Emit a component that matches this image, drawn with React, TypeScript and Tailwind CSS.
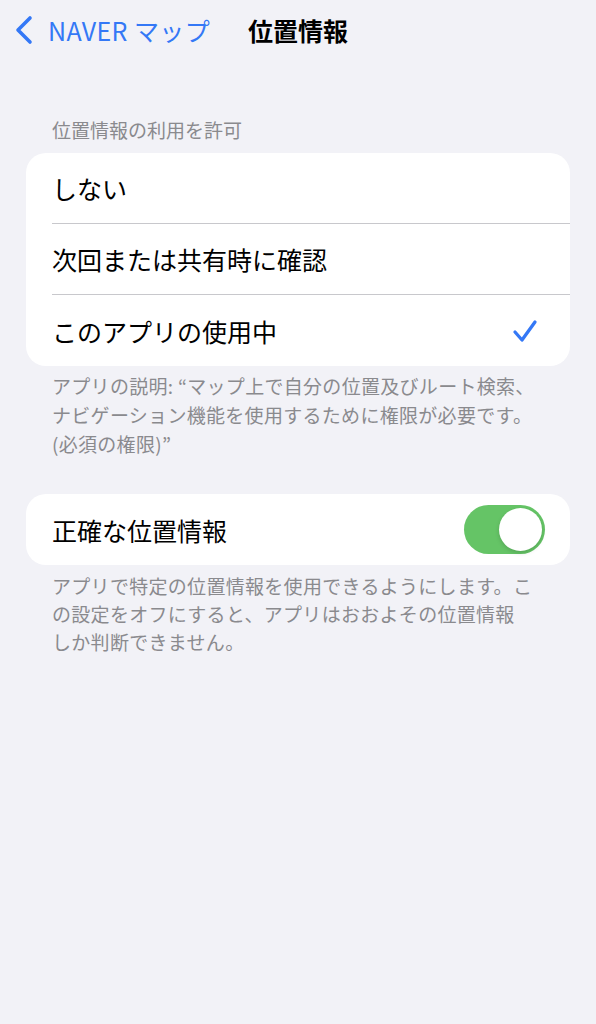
import React from "react"

const font = { fontFamily: '"Noto Sans CJK JP", "Noto Sans", sans-serif' }

function Row({ label, last, right }: { label: string; last?: boolean; right?: React.ReactNode }) {
  return (
    <div className="pl-[26px] h-[71px] flex">
      <div className={`flex-1 flex items-center justify-between ${last ? "" : "border-b border-[#c8c8cc]"}`}>
        <span className="text-[25px] leading-[32px] text-black">{label}</span>
        {right}
      </div>
    </div>
  )
}

export default function App() {
  return (
    <div className="min-h-screen bg-[#f2f2f7]" style={font}>
      {/* Nav */}
      <div className="relative h-[60px] flex items-center pl-[14px]">
        <svg width="20" height="30" viewBox="0 0 20 30" className="mr-[14px]">
          <path d="M16 3 L4 15 L16 27" fill="none" stroke="#3478f6" strokeWidth="3.6" strokeLinecap="round" strokeLinejoin="round" />
        </svg>
        <span className="text-[25px] leading-[32px] text-[#3478f6] tracking-[0.4px]">NAVER マップ</span>
        <span className="absolute left-1/2 -translate-x-1/2 text-[25px] leading-[32px] font-bold text-black">位置情報</span>
      </div>

      <div className="px-[26px]">
        <div className="mt-[57px] pl-[26px] text-[19px] leading-[26px] text-[#8a8a8e]">位置情報の利用を許可</div>

        <div className="mt-[10px] bg-white rounded-[20px] overflow-hidden">
          <Row label="しない" />
          <Row label="次回または共有時に確認" />
          <Row
            label="このアプリの使用中"
            last
            right={
              <svg width="26" height="24" viewBox="0 0 26 24" className="mr-[32px]">
                <path d="M3 13 L10 21 L23 3" fill="none" stroke="#3478f6" strokeWidth="3.3" strokeLinecap="round" strokeLinejoin="round" />
              </svg>
            }
          />
        </div>

        <div className="pt-[5px] pl-[26px] text-[19px] leading-[29px] tracking-[0.3px] text-[#8a8a8e]">
          アプリの説明: “マップ上で自分の位置及びルート検索、
          <br />
          ナビゲーション機能を使用するために権限が必要です。
          <br />
          (必須の権限)”
        </div>

        <div className="mt-[36px] bg-white rounded-[20px] h-[71px] pl-[26px] pr-[25px] flex items-center justify-between">
          <span className="text-[25px] leading-[32px] text-black">正確な位置情報</span>
          <div className="w-[81px] h-[49px] rounded-full bg-[#65c466] flex items-center justify-end pr-[3px]">
            <div className="w-[43px] h-[43px] rounded-full bg-white shadow-[0_2px_4px_rgba(0,0,0,0.15)]" />
          </div>
        </div>

        <div className="pt-[7px] pl-[26px] text-[19px] leading-[28px] tracking-[0.3px] text-[#8a8a8e]">
          アプリで特定の位置情報を使用できるようにします。こ
          <br />
          の設定をオフにすると、アプリはおおよその位置情報
          <br />
          しか判断できません。
        </div>
      </div>
    </div>
  )
}
